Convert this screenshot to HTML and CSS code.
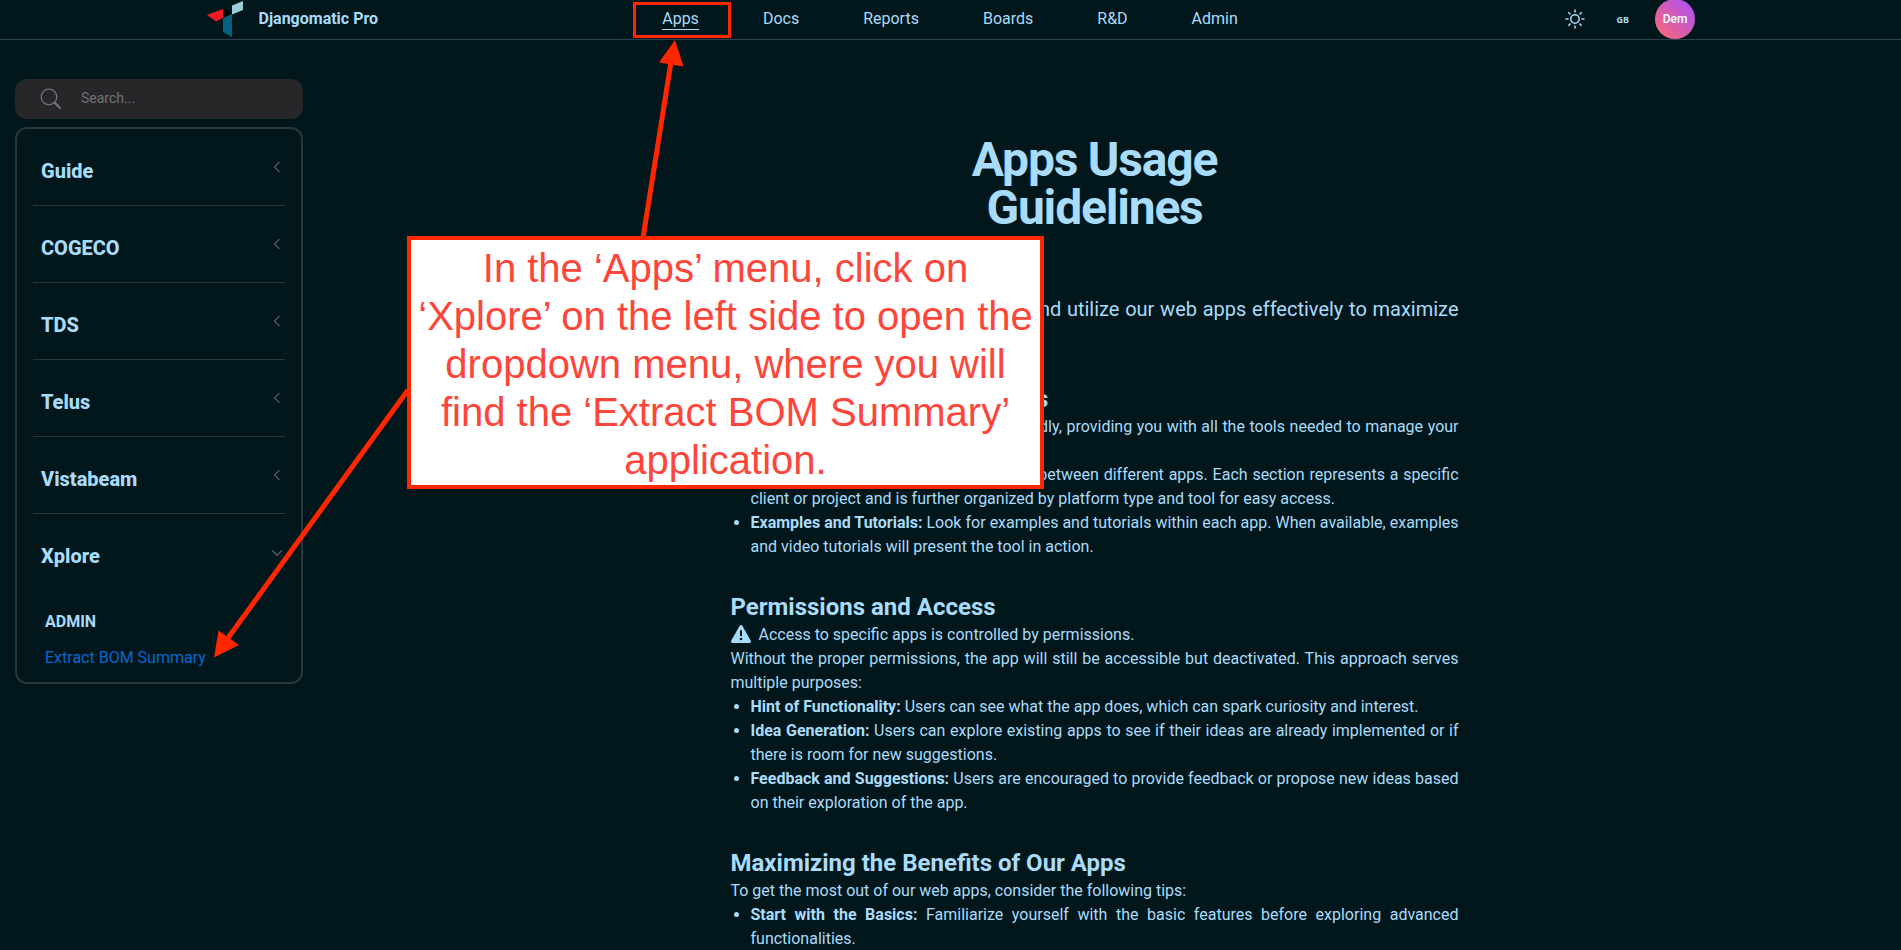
FILE: index.html
```html
<!DOCTYPE html>
<html lang="en">
<head>
<meta charset="utf-8">
<title>Djangomatic Pro</title>
<link rel="stylesheet" href="styles.css">
</head>
<body>
<header class="topbar">
  <div class="brand">
    <svg class="logo" width="36" height="38" viewBox="0 0 36 38">
      <path fill="#ee1c25" d="M0 15 16 9V18L9 21.500Z"/>
      <path fill="#000" d="M16 9 25 13 16 18Z"/>
      <path fill="#06607f" d="M16 18 25 14V37L16 32Z"/>
      <path fill="#9accda" d="M25 5.500 36 1V10L25 14.500Z"/>
    </svg>
    <span class="brand-name">Djangomatic Pro</span>
  </div>
  <nav class="nav">
    <a class="active">Apps</a><a>Docs</a><a>Reports</a><a>Boards</a><a>R&amp;D</a><a>Admin</a>
  </nav>
  <div class="tools">
    <svg class="sun" width="20" height="20" viewBox="0 0 20 20" fill="none" stroke="#a9dcfa" stroke-width="1.500">
      <circle cx="10" cy="10" r="4.200"/>
      <path d="M10 .5V3.500M10 16.500V19.500M.5 10H3.500M16.500 10H19.500M3.300 3.300 5.400 5.400M14.600 14.600 16.700 16.700M3.300 16.700 5.400 14.600M14.600 5.400 16.700 3.300"/>
    </svg>
    <span class="lang">GB</span>
    <span class="avatar">Dem</span>
  </div>
</header>
<div class="layout">
  <aside class="sidebar">
    <div class="search">
      <svg width="22" height="22" viewBox="0 0 22 22" fill="none" stroke="#71717a">
        <circle cx="9" cy="9" r="7.800" stroke-width="1.300"/>
        <path d="M14.500 14.500 20 20" stroke-width="2.400" stroke-linecap="round"/>
      </svg>
      <span>Search...</span>
    </div>
    <div class="menu">
      <div class="item"><span>Guide</span><svg class="chev" viewBox="0 0 12 12"><path d="M8.500 1.200 3.500 6 8.500 10.800"/></svg></div>
      <div class="item"><span>COGECO</span><svg class="chev" viewBox="0 0 12 12"><path d="M8.500 1.200 3.500 6 8.500 10.800"/></svg></div>
      <div class="item"><span>TDS</span><svg class="chev" viewBox="0 0 12 12"><path d="M8.500 1.200 3.500 6 8.500 10.800"/></svg></div>
      <div class="item"><span>Telus</span><svg class="chev" viewBox="0 0 12 12"><path d="M8.500 1.200 3.500 6 8.500 10.800"/></svg></div>
      <div class="item"><span>Vistabeam</span><svg class="chev" viewBox="0 0 12 12"><path d="M8.500 1.200 3.500 6 8.500 10.800"/></svg></div>
      <div class="item last"><span>Xplore</span><svg class="chev" viewBox="0 0 12 12"><path d="M1.200 3.500 6 8.500 10.800 3.500"/></svg></div>
      <div class="sub">
        <div class="sub-title">ADMIN</div>
        <a class="sub-link">Extract BOM Summary</a>
      </div>
    </div>
  </aside>
  <main class="article">
    <h1>Apps Usage<br>Guidelines</h1>
    <p class="lead">Explore how to properly navigate and utilize our web apps effectively to maximize your productivity.</p>
    <section>
      <h2>How to Navigate All Our Apps</h2>
      <p>Our web apps are designed to be user-friendly, providing you with all the tools needed to manage your tasks.</p>
      <ul>
        <li><b>Navigation:</b> Use the sidebar to navigate between different apps. Each section represents a specific client or project and is further organized by platform type and tool for easy access.</li>
        <li><b>Examples and Tutorials:</b> Look for examples and tutorials within each app. When available, examples and video tutorials will present the tool in action.</li>
      </ul>
    </section>
    <section>
      <h2>Permissions and Access</h2>
      <p class="notice"><svg width="20" height="18" viewBox="0 0 20 18"><path fill="#a9dcfa" d="M10 0C10.600 0 11 .3 11.300.8L19.700 15.600C20.300 16.700 19.600 18 18.400 18H1.600C.4 18-.3 16.700.3 15.600L8.700.8C9 .3 9.400 0 10 0Z"/><path stroke="#02171c" stroke-width="2" stroke-linecap="round" d="M10 6V10.300"/><circle cx="10" cy="14" r="1.300" fill="#02171c"/></svg><span>Access to specific apps is controlled by permissions.</span></p>
      <p>Without the proper permissions, the app will still be accessible but deactivated. This approach serves multiple purposes:</p>
      <ul>
        <li><b>Hint of Functionality:</b> Users can see what the app does, which can spark curiosity and interest.</li>
        <li><b>Idea Generation:</b> Users can explore existing apps to see if their ideas are already implemented or if there is room for new suggestions.</li>
        <li><b>Feedback and Suggestions:</b> Users are encouraged to provide feedback or propose new ideas based on their exploration of the app.</li>
      </ul>
    </section>
    <section>
      <h2>Maximizing the Benefits of Our Apps</h2>
      <p>To get the most out of our web apps, consider the following tips:</p>
      <ul>
        <li><b>Start with the Basics:</b> Familiarize yourself with the basic features before exploring advanced functionalities.</li>
      </ul>
    </section>
  </main>
</div>
<svg class="marks" width="1901" height="950" viewBox="0 0 1901 950" fill="none" stroke="#ff2600">
  <rect x="634.500" y="3.500" width="95" height="33" stroke-width="3"/>
  <path d="M643 238 671 62M408 390 228 638" stroke-width="5"/>
  <path d="M675 40 683.500 66.500 659 62.500ZM214 657.500 218.500 630.500 239 645Z" fill="#ff2600" stroke="none"/>
</svg>
<div class="callout">In the ‘Apps’ menu, click on<br>‘Xplore’ on the left side to open the<br>dropdown menu, where you will<br>find the ‘Extract BOM Summary’<br>application.</div>
</body>
</html>
```
FILE: styles.css
```css
* { box-sizing: border-box; }
body {
  margin: 0;
  height: 950px;
  overflow: hidden;
  position: relative;
  background: #02171c;
  color: #a9dcfa;
  font: 16px/24px Roboto, sans-serif;
}
h1, h2, p, ul { margin: 0; padding: 0; }
.topbar {
  height: 40px;
  padding: 0 206px 2px 207px;
  border-bottom: 1px solid #2f4150;
  display: grid;
  grid-template-columns: 1fr auto 1fr;
  align-items: center;
}
.brand { display: flex; align-items: center; gap: 15.5px; }
.brand-name { font-weight: 700; }
.logo { display: block; }
.nav { display: flex; gap: 64px; line-height: 20px; margin: 0 1px 0 -1px; }
.active { box-shadow: 0 1px 0 #a9dcfa; line-height: 18px; padding-top: 1px; }
.tools { display: flex; align-items: center; justify-content: flex-end; }
.sun { margin-right: 32px; }
.lang { font-size: 9px; font-weight: 700; font-family: "Noto Sans", sans-serif; margin: 1px 26px 0 -1px; }
.avatar {
  width: 40px;
  height: 40px;
  margin: -1px 0;
  border-radius: 50%;
  background: linear-gradient(45deg, #ff6b6b, #b050f0 90%);
  color: #fff;
  font-size: 12px;
  font-weight: 500;
  line-height: 40px;
  text-align: center;
}
.layout { display: flex; }
.sidebar { width: 288px; margin: 39px 0 0 15px; flex: none; }
.search {
  height: 40px;
  border-radius: 12px;
  background: #27272a;
  color: #71717a;
  font-size: 14px;
  padding: 0 0 2px 25px;
  display: flex;
  align-items: center;
  gap: 19px;
}
.search svg { position: relative; top: 1px; }
.menu {
  height: 557px;
  margin-top: 8px;
  padding: 0 16px;
  border: 2px solid #29363c;
  border-radius: 12px;
}
.item {
  height: 77px;
  padding: 7px 2px 0 8px;
  border-bottom: 1px solid #29363c;
  display: flex;
  align-items: center;
  justify-content: space-between;
  font-size: 20px;
  font-weight: 800;
}
.last { border-bottom: 0; }
.chev {
  width: 12px;
  height: 12px;
  margin-top: -7px;
  fill: none;
  stroke: #5c636b;
  stroke-width: 1.1;
}
.sub { padding: 19px 12px; }
.sub-title { font-weight: 700; margin-bottom: 12px; }
.sub-link { color: #0568d0; }
.article { width: 728px; margin: 96px 0 0 427.500px; }
h1 {
  font-size: 48px;
  line-height: 48px;
  font-weight: 700;
  letter-spacing: -1.200px;
  text-align: center;
}
.lead { margin-top: 63px; font-size: 20px; line-height: 28px; text-align: justify; min-height: 56px; }
section { margin-top: 32px; text-align: justify; }
h2 { font-size: 24px; line-height: 32px; font-weight: 700; text-align: left; }
.notice { display: flex; align-items: center; gap: 8px; }
.notice svg { margin-top: -3px; }
ul { padding-left: 20px; }
.marks { position: absolute; left: 0; top: 0; }
.callout {
  position: absolute;
  left: 407px;
  top: 236px;
  width: 637px;
  height: 253px;
  padding-top: 4px;
  border: 4px solid #ff2600;
  background: #fff;
  color: #ff453a;
  font: 40px/48px "Liberation Sans", Arial, sans-serif;
  text-align: center;
  white-space: nowrap;
}
```
